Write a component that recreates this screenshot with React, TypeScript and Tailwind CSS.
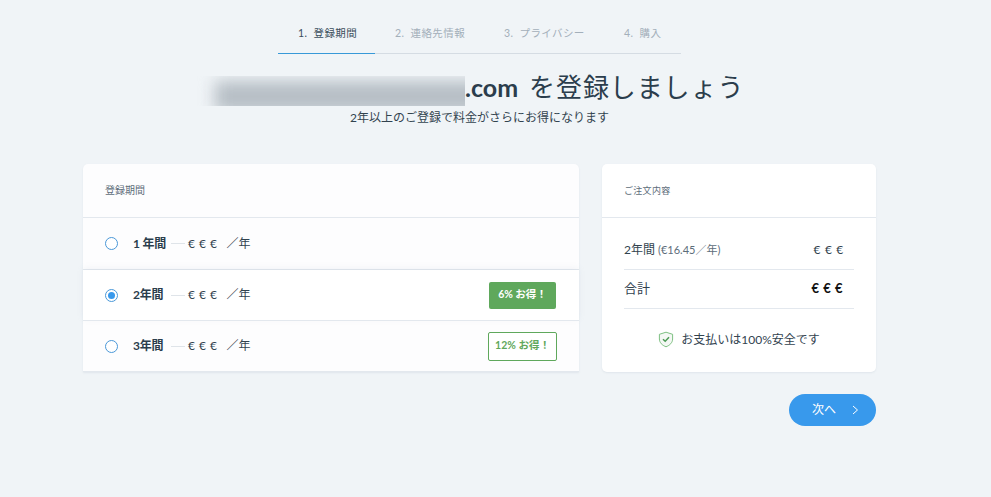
import React from "react";

const font = "font-['Lato','Noto_Sans_CJK_JP',sans-serif]";

const steps = [
  { label: "1.  登録期間", width: "w-[97px]", active: true },
  { label: "2.  連絡先情報", width: "w-[109px]", active: false },
  { label: "3.  プライバシー", width: "w-[120px]", active: false },
  { label: "4.  購入", width: "w-[77px]", active: false },
];

const Stepper = () => (
  <div className="flex w-[403px] h-[29px] ml-[278px]">
    {steps.map((s) => (
      <div
        key={s.label}
        className={`${s.width} h-[29px] pl-5 pt-[1px] text-[10.5px] leading-[15px] tracking-[0.4px] whitespace-pre border-b ${
          s.active ? "text-[#3b4d5c] border-[#3899d8]" : "text-[#a3afba] border-[#d5dce3]"
        }`}
      >
        {s.label}
      </div>
    ))}
  </div>
);

const Radio = ({ checked }: { checked?: boolean }) => (
  <span className="flex items-center justify-center w-[13px] h-[13px] rounded-full border border-[#4a98d8] bg-white">
    {checked && <span className="block w-[7px] h-[7px] rounded-full bg-[#3899ec]" />}
  </span>
);

interface PlanRowProps {
  term: string;
  checked?: boolean;
  badge?: React.ReactNode;
  rowClass: string;
}

const PlanRow = ({ term, checked, badge, rowClass }: PlanRowProps) => (
  <div className={`flex items-center pl-[22px] pr-[22px] border-b border-[#e3e8ee] ${rowClass}`}>
    <Radio checked={checked} />
    <span className="ml-[15px] w-[32px] whitespace-nowrap text-[12px] tracking-[-0.2px] font-bold text-[#2b3d4c]">{term}</span>
    <span className="ml-[6px] w-[14px] h-px bg-[#dfe4e9]" />
    <span className="ml-[3px] text-[12px] text-[#32434f] tracking-[0.5px]">€ € €</span>
    <span className="ml-[9px] text-[12px] text-[#32434f]">／年</span>
    <div className="ml-auto">{badge}</div>
  </div>
);

const ShieldIcon = () => (
  <svg width="16" height="17" viewBox="0 0 16 17" fill="none">
    <path
      d="M8 1.2 14.6 3.3V8c0 3.6-2.7 6.3-6.6 7.8C4.1 14.3 1.4 11.6 1.4 8V3.3L8 1.2Z"
      stroke="#6fb974"
      strokeWidth="0.9"
      fill="#f4f8f4"
    />
    <path d="M5 8.2 7.2 10.3 11 6.3" stroke="#4b9a54" strokeWidth="1.5" />
  </svg>
);

export default function App() {
  return (
    <div className={`${font} w-[991px] h-[497px] bg-[#f0f4f7] overflow-hidden text-[#2b3d4c]`}>
      <div className="pt-[25px]">
        <Stepper />
      </div>

      {/* Heading */}
      <div className="flex items-center h-[32px] mt-[17px] ml-[195px]">
        <div className="relative mt-[8px] w-[270px] h-[30px] overflow-hidden">
          <div className="absolute left-[20px] right-[-20px] top-[5px] bottom-[-6px] bg-[#b6bec5] blur-[8px]" />
        </div>
        <span className="text-[25px] font-bold text-[#2b3d4c] leading-[32px]">.com</span>
        <span className="ml-[11px] text-[26px] text-[#2b3d4c] leading-[32px] tracking-[0.9px]">を登録しましょう</span>
      </div>
      <p className="mt-[6px] text-center w-[959px] text-[12px] leading-[18px] text-[#32434f]">
        2年以上のご登録で料金がさらにお得になります
      </p>

      <div className="ml-[83px] w-[793px] mt-[37px]">
        <div className="flex gap-[23px]">
          {/* Plans */}
          <div className="w-[496px] h-[208px] bg-[#fdfdfe] rounded-t-[5px] shadow-[0_1px_2px_rgba(160,175,190,0.2)]">
            <div className="h-[54px] flex items-center pl-[22px] border-b border-[#e3e8ee] text-[10px] text-[#5d6d7a]">
              登録期間
            </div>
            <PlanRow term="1 年間" rowClass="h-[52px]" />
            <PlanRow
              term="2年間"
              checked
              rowClass="h-[51px] bg-white shadow-[0_-2px_6px_rgba(160,175,190,0.12)]"
              badge={
                <span className="flex items-center justify-center mr-px w-[67px] h-[27px] rounded-[2px] bg-[#5fa85c] text-white text-[10.5px] font-bold">
                  6% お得！
                </span>
              }
            />
            <PlanRow
              term="3年間"
              rowClass="h-[51px]"
              badge={
                <span className="flex items-center justify-center w-[69px] h-[29px] rounded-[2px] border border-[#5fa85c] bg-white text-[#5fa85c] text-[10.5px] font-bold">
                  12% お得！
                </span>
              }
            />
          </div>

          {/* Summary */}
          <div className="w-[274px] h-[208px] bg-white rounded-[5px] shadow-[0_1px_2px_rgba(160,175,190,0.2)]">
            <div className="h-[54px] flex items-center pl-[22px] border-b border-[#e3e8ee] text-[9px] tracking-[0.3px] text-[#5d6d7a]">
              ご注文内容
            </div>
            <div className="mx-[22px]">
              <div className="flex items-center justify-between h-[52px] pt-[13px] pr-[10px] border-b border-[#e3e8ee]">
                <span className="text-[12px] text-[#32434f]">
                  2年間 <span className="text-[11px] text-[#5d6d7a]">(€16.45／年)</span>
                </span>
                <span className="text-[12px] text-[#32434f] tracking-[0.7px]">€ € €</span>
              </div>
              <div className="flex items-center justify-between h-[39px] pr-[11px] border-b border-[#e3e8ee]">
                <span className="text-[13px] text-[#32434f]">合計</span>
                <span className="text-[13px] font-bold text-[#111] tracking-[0.5px]">€ € €</span>
              </div>
              <div className="flex items-center justify-center gap-[7px] h-[61px] text-[12px] text-[#32434f]">
                <ShieldIcon />
                お支払いは100%安全です
              </div>
            </div>
          </div>
        </div>

        <div className="flex justify-end mt-[22px]">
          <button className="flex items-center w-[87px] h-[32px] rounded-full bg-[#3899ec] text-white text-[12px] pl-[23px]">
            次へ
            <svg className="ml-[16px]" width="7" height="10" viewBox="0 0 7 10" fill="none">
              <path d="M1 1 5.5 5 1 9" stroke="#fff" strokeWidth="1" />
            </svg>
          </button>
        </div>
      </div>
    </div>
  );
}
